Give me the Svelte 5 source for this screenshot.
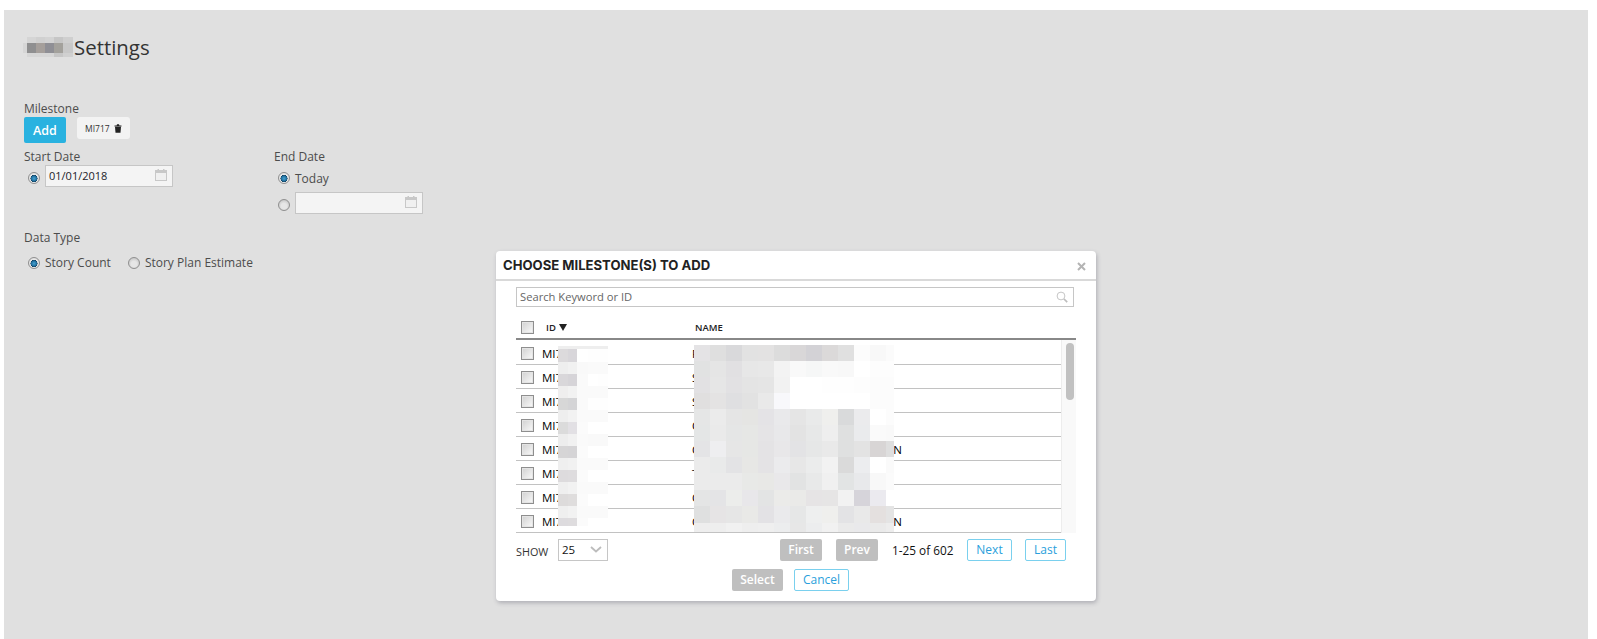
<script>
  const titleCells = [
    ['e0e0e0','d5d5d5','d0d0d0','d3d3d3','c6c6c6','cfcfcf'],
    ['d6d6d6','8f8f90','a59f9b','8f8f95','a3a19c','c8c8c8'],
    ['e0e0e0','d6d6d6','d6d6d6','d6d6d6','c6c6c6','d0d0d0']
  ];
  const idCells = [
    ['eeeeee','eeeeee','eeeeee','eeeeee','eeeeee'],
    ['dcdadc','d8d6da','ffffff','fefefe','fefefe'],
    ['eeeeee','f1f1f1','f9f9f9','fafafa','fafafa'],
    ['d9d7da','d6d4d8','fafafa','ffffff','fefefe'],
    ['efeeee','f2f2f2','fafafa','fafafa','fafafa'],
    ['d7d7d7','d4d4d6','fafafa','fefefe','fefefe'],
    ['eeeeee','f2f2f2','fafafa','fafafa','fafafa'],
    ['dbdbdb','e2e0e4','fbfbfb','ffffff','ffffff'],
    ['ededed','f1f1f1','fafafa','f9f9f9','f9f9f9'],
    ['d6d5d6','d5d4d6','fbfbfb','ffffff','ffffff'],
    ['efefef','f1f1f1','fafafa','fafafa','fafafa'],
    ['dddbdd','dedcde','fbfbfb','ffffff','ffffff'],
    ['efefef','f2f2f2','fafafa','fafafa','fafafa'],
    ['dddbdb','dfdddd','fbfbfb','ffffff','ffffff'],
    ['efefef','f2f2f2','fafafa','fafafa','fafafa'],
    ['dddbde','dedcde','fbfbfb','ffffff','ffffff']
  ];
  const nameCells = [
    'e4e3e5 dfdfdf d9d9db e2e2e2 e3e2e2 dcdcdc d9d7d8 d3d2d6 dbd9d9 e0e0e0 fcfcfc f8f8f8 fbfbfb',
    'e1e2e2 e5e5e5 e1e0e2 e7e7e7 e8e8e8 f3f3f3 f9f9f9 f6f7f7 f9f9f9 f8f8f8 ffffff fdfdfd fdfdfd',
    'e2e1e3 e6e6e6 e2e1e3 e4e4e4 e5e5e5 f2f2f2 ffffff ffffff fefefe fefefe fdfdfd fcfcfc fcfcfc',
    'e0dfdf e4e3e3 dfdfe1 e2e2e2 e9e9e9 f8f8fb ffffff ffffff ffffff ffffff ffffff fcfcfc fcfcfc',
    'e5e6e6 ebebeb e5e5e5 e5e5e3 e4e3e6 e9e9eb e5e5e5 e9eaea efefed d9dadb ebebed ffffff fcfcfc',
    'e4e6e6 eaeaea e5e6e6 e6e7e5 e5e4e6 e8e8ea e3e3e3 e7e8e8 eeeeee dfe0e0 eaebed fafafa f9f9f9',
    'e4e4e6 eeeef0 e6e6e6 e6e7e5 e4e3e5 e8e7e9 e3e3e5 e6e7e7 e9e9e9 dfe0e0 e3e3e3 d8d5d5 dedede',
    'ebebeb e9eaea e3e3e5 e7e7e5 e4e3e5 ebebed e7e7e7 ebecec f2f2f2 dadada ecedef ffffff fafafa',
    'ebebeb ebebeb ebebeb e8e9e7 e8e8e6 e9e8ea e2e3e3 e8e9e9 f0f0f0 e2e4e4 e8e9eb f8f8f8 fbfbfb',
    'e4e5e5 e4e4e6 ecedeb e8e7ea e3e4e4 ebebe9 eaeae8 e6e4e5 e6e5e5 f2f2f2 d6d4da ebeaef ffffff',
    'dfe0e0 e6e4e5 e6e6e6 e9e9e7 e3e2e5 eaeaec e6e7e7 eeefef efefed e3e3e5 e9e9e9 e4e0df e4e4e4',
    'eeeeee eeeeee f1f1f1 eeeeee efefef ecedee e7e7e7 ecedee f1f1f1 eaeaea e9e9eb eaeaea ededed'
  ].map((r) => r.split(' '));
  const rows = [
    { first: 'R', tail: '' },
    { first: 'S', tail: '' },
    { first: 'S', tail: '' },
    { first: 'C', tail: '' },
    { first: 'C', tail: 'N' },
    { first: 'T', tail: '' },
    { first: 'C', tail: '' },
    { first: 'C', tail: 'N' }
  ];
</script>

{#snippet calendar()}
  <svg class="cal" width="12" height="12" viewBox="0 0 12 12" aria-hidden="true">
    <rect x="0.5" y="1.5" width="11" height="10" fill="#f0f0f0" stroke="#c8c8c8"/>
    <rect x="0.5" y="1.5" width="11" height="2.5" fill="#c8c8c8"/>
    <rect x="2.5" y="0" width="1.5" height="2.5" fill="#c8c8c8"/>
    <rect x="8" y="0" width="1.5" height="2.5" fill="#c8c8c8"/>
  </svg>
{/snippet}

{#snippet mosaic(cells, cls)}
  <div class="mosaic {cls}" aria-hidden="true">
    {#each cells as row}
      {#each row as c}
        <span style="background:#{c}"></span>
      {/each}
    {/each}
  </div>
{/snippet}

<main class="page">
  <h1 class="title">
    {@render mosaic(titleCells, 'm-title')}
    <span class="title-text">Settings</span>
  </h1>

  <div class="label milestone-label">Milestone</div>
  <div class="milestone-row">
    <button class="add">Add</button>
    <span class="chip">MI717
      <svg width="8" height="9" viewBox="0 0 8 9" aria-hidden="true">
        <path d="M0.5 1.4h7v1H0.5z M2.6 1.4 3 .3h2l.4 1.1z" fill="#222"/>
        <path d="M1 2.8h6l-.5 6H1.5z" fill="#222"/>
      </svg>
    </span>
  </div>

  <div class="dates">
    <section class="date-col">
      <div class="label">Start Date</div>
      <div class="opt start-opt">
        <span class="radio on low"></span>
        <div class="input"><span>01/01/2018</span>{@render calendar()}</div>
      </div>
    </section>
    <section class="date-col">
      <div class="label">End Date</div>
      <div class="opt today-opt">
        <span class="radio on"></span><span class="label today">Today</span>
      </div>
      <div class="opt end-opt">
        <span class="radio low"></span>
        <div class="input"><span></span>{@render calendar()}</div>
      </div>
    </section>
  </div>

  <div class="label data-label">Data Type</div>
  <div class="opt data-opts">
    <span class="radio on"></span><span class="label story">Story Count</span>
    <span class="radio"></span><span class="label">Story Plan Estimate</span>
  </div>
</main>

<div class="modal">
  <header class="m-head">
    <h2>CHOOSE MILESTONE(S) TO ADD</h2>
    <svg class="close" width="9" height="9" viewBox="0 0 9 9" aria-hidden="true">
      <path d="M1 1l7 7M8 1L1 8" stroke="#b4b4b4" stroke-width="2"/>
    </svg>
  </header>

  <div class="search">
    <span>Search Keyword or ID</span>
    <svg width="12" height="12" viewBox="0 0 12 12" aria-hidden="true">
      <circle cx="5" cy="5" r="3.9" fill="none" stroke="#c6c6c6" stroke-width="1"/>
      <path d="M8 8l3.2 3.2" stroke="#bdbdbd" stroke-width="1.7"/>
    </svg>
  </div>

  <div class="t-head">
    <span class="check"></span>
    <span class="th th-id">ID <i class="tri"></i></span>
    <span class="th th-name">NAME</span>
  </div>

  <div class="t-body">
    <div class="t-rows">
      {#each rows as r}
        <div class="row">
          <span class="check"></span>
          <span class="cell-id">MI717</span>
          <span class="cell-name">{r.first}</span>
          {#if r.tail}<span class="cell-tail">{r.tail}</span>{/if}
        </div>
      {/each}
    </div>
    <div class="scroll"><div class="thumb"></div></div>
    {@render mosaic(idCells, 'm-id')}
    {@render mosaic(nameCells, 'm-name')}
  </div>

  <div class="pager">
    <span class="show">SHOW</span>
    <div class="select">
      <span>25</span>
      <svg width="12" height="7" viewBox="0 0 12 7" aria-hidden="true">
        <path d="M1 1l5 4.5L11 1" fill="none" stroke="#bcbcbc" stroke-width="1.8"/>
      </svg>
    </div>
    <button class="btn off first">First</button>
    <button class="btn off prev">Prev</button>
    <span class="count">1-25 of 602</span>
    <button class="btn line next">Next</button>
    <button class="btn line last">Last</button>
  </div>

  <div class="foot">
    <button class="btn off select-btn">Select</button>
    <button class="btn line cancel">Cancel</button>
  </div>
</div>

<style>
  :global(body) {
    margin: 0;
    background: #fff;
    font-family: "Open Sans", "Liberation Sans", sans-serif;
  }
  .page {
    box-sizing: border-box;
    margin: 10px 9px 0 4px;
    height: 629px;
    padding: 1px 20px 0;
    background: #e0e0e0;
    color: #4c4c4c;
    overflow: hidden;
  }
  .title {
    display: flex;
    align-items: center;
    margin: 22px 0 0;
    height: 28px;
    font-size: 20.4px;
    font-weight: 400;
    color: #333;
  }
  .title-text { margin-left: 1px; }
  .label { font-size: 12px; line-height: 16px; color: #4c4c4c; }
  .today { padding-top: 1px; }
  .milestone-label { margin-top: 39px; height: 17px; line-height: 17px; }
  .milestone-row { display: flex; align-items: flex-start; height: 26px; }
  .add {
    width: 42px;
    height: 26px;
    padding: 0;
    border: 0;
    border-radius: 2px;
    background: #29b2e0;
    color: #fff;
    font: 600 12.5px "Open Sans", sans-serif;
  }
  .chip {
    display: flex;
    align-items: center;
    gap: 4px;
    box-sizing: border-box;
    width: 53px;
    height: 22px;
    margin-left: 11px;
    padding-left: 8px;
    border-radius: 3px;
    background: #f3f3f3;
    font-size: 8.5px;
    color: #333;
  }
  .dates { display: flex; margin-top: 6px; }
  .date-col { width: 250px; }
  .opt { display: flex; align-items: center; }
  .radio {
    box-sizing: border-box;
    flex: none;
    width: 12px;
    height: 12px;
    border: 1px solid #8f8f8f;
    border-radius: 50%;
    background: radial-gradient(circle at 50% 60%, #e6e6e6 0 35%, #b8b8b8 100%);
  }
  .radio.on {
    background:
      radial-gradient(circle at 50% 55%, #4aa3d0 0, #1f6f9f 2.6px, #12405e 3.4px, #ececec 3.7px, #cfcfcf 100%);
  }
  .radio.low { margin-top: 3px; }
  .start-opt { margin: 0 0 0 4px; gap: 5px; height: 22px; align-items: center; }
  .input {
    display: flex;
    align-items: center;
    justify-content: space-between;
    box-sizing: border-box;
    width: 128px;
    height: 22px;
    padding: 0 5px 1px 3px;
    border: 1px solid #c6c6c6;
    background: #f4f4f4;
    font-size: 11px;
    color: #1c1c2a;
  }
  .cal { flex: none; margin-top: -2px; }
  .today-opt { margin: 2px 0 0 4px; gap: 5px; height: 22px; }
  .end-opt { margin: 3px 0 0 4px; gap: 5px; height: 22px; }
  .data-label { margin-top: 16px; }
  .data-opts { margin: 7px 0 0 4px; gap: 5px; height: 20px; }
  .story { margin-right: 12px; }

  .mosaic { display: grid; flex: none; }
  .m-title {
    grid-template-columns: 4px 9px 9px 9px 9px 10px;
    grid-template-rows: 6px 10px 4px;
    width: 50px;
    height: 20px;
    margin-left: -1px;
  }
  .m-id {
    position: absolute;
    left: 42px;
    top: 6px;
    grid-template-columns: 10px 9px 11px 10px 10px;
    grid-template-rows: 3px 13px repeat(13, 12px) 8px;
  }
  .m-name {
    position: absolute;
    left: 178px;
    top: 5px;
    grid-template-columns: repeat(12, 16px) 8px;
    grid-template-rows: repeat(8, 16px) repeat(3, 16.7px) 9px;
  }

  .modal {
    position: absolute;
    left: 496px;
    top: 251px;
    box-sizing: border-box;
    width: 600px;
    height: 350px;
    padding: 0 20px;
    border-radius: 4px;
    background: #fff;
    box-shadow: 1px 2px 4px rgba(60, 60, 80, 0.3);
    font-size: 11.5px;
    color: #111;
  }
  .m-head {
    display: flex;
    align-items: center;
    justify-content: space-between;
    height: 28px;
    margin: 0 -20px;
    padding: 0 10px 0 7px;
    border-bottom: 2px solid #d9d9d9;
  }
  .m-head h2 {
    margin: 0;
    font: 700 13.1px Inter, "Liberation Sans", sans-serif;
    color: #222;
  }
  .close { margin: 3px 0 0; }
  .search {
    display: flex;
    align-items: center;
    justify-content: space-between;
    box-sizing: border-box;
    width: 558px;
    height: 20px;
    margin-top: 6px;
    padding: 0 5px 1px 3px;
    border: 1px solid #c6c6c6;
    color: #666;
    font-size: 11.2px;
  }
  .t-head {
    display: flex;
    align-items: center;
    box-sizing: border-box;
    height: 33px;
    padding: 10px 0 0 5px;
    border-bottom: 2px solid #888;
  }
  .th { font-size: 9.5px; font-weight: 600; color: #222; }
  .th-id { display: flex; align-items: center; gap: 3px; margin-left: 12px; width: 149px; }
  .tri {
    width: 0;
    height: 0;
    border: 4px solid transparent;
    border-top: 7px solid #222;
    border-bottom: 0;
  }
  .check {
    flex: none;
    box-sizing: border-box;
    width: 13px;
    height: 13px;
    border: 1px solid #8e8e8e;
    box-shadow: inset 0 0 0 1px #e4e4e4;
    background: linear-gradient(135deg, #d0d0d0, #fafafa);
  }
  .t-body { position: relative; display: flex; height: 193px; overflow: hidden; }
  .t-rows { flex: 1; padding-top: 1px; }
  .row {
    display: flex;
    align-items: center;
    box-sizing: border-box;
    height: 24px;
    padding: 2px 0 0 5px;
    border-bottom: 1px solid #c2c2c2;
  }
  .cell-id { width: 150px; margin-left: 8px; color: #000; }
  .cell-name { color: #000; }
  .cell-tail { margin-left: 194px; color: #000; }
  .scroll {
    box-sizing: border-box;
    flex: none;
    width: 15px;
    padding: 3px 0 0 4px;
    border-left: 1px solid #ededed;
    background: #f9f9f9;
  }
  .thumb { width: 8px; height: 57px; border-radius: 4px; background: #c1c1c1; }

  .pager { display: flex; align-items: center; height: 22px; margin-top: 6px; }
  .show { font-size: 10.8px; color: #333; width: 42px; padding-top: 2px; }
  .select {
    display: flex;
    align-items: center;
    justify-content: space-between;
    box-sizing: border-box;
    width: 50px;
    height: 22px;
    padding: 0 5px 2px 3px;
    border: 1px solid #c6c6c6;
  }
  .btn {
    box-sizing: border-box;
    height: 22px;
    padding: 0 0 2px;
    border-radius: 2px;
    font: 600 12px "Open Sans", sans-serif;
  }
  .btn.off { border: 0; background: #bfbfbf; color: #fff; }
  .btn.line {
    border: 1px solid #7ad0ee;
    background: #fff;
    font-weight: 400;
    color: #2a9fdc;
  }
  .first { width: 42px; margin-left: 172px; }
  .prev { width: 42px; margin-left: 14px; }
  .count { margin: 0 13px 0 14px; width: 62px; white-space: nowrap; font-size: 11.8px; color: #111; }
  .next { width: 45px; }
  .last { width: 41px; margin-left: 13px; }
  .foot { display: flex; gap: 11px; margin-top: 8px; padding-left: 216px; }
  .select-btn { width: 51px; }
  .cancel { width: 55px; }
</style>
